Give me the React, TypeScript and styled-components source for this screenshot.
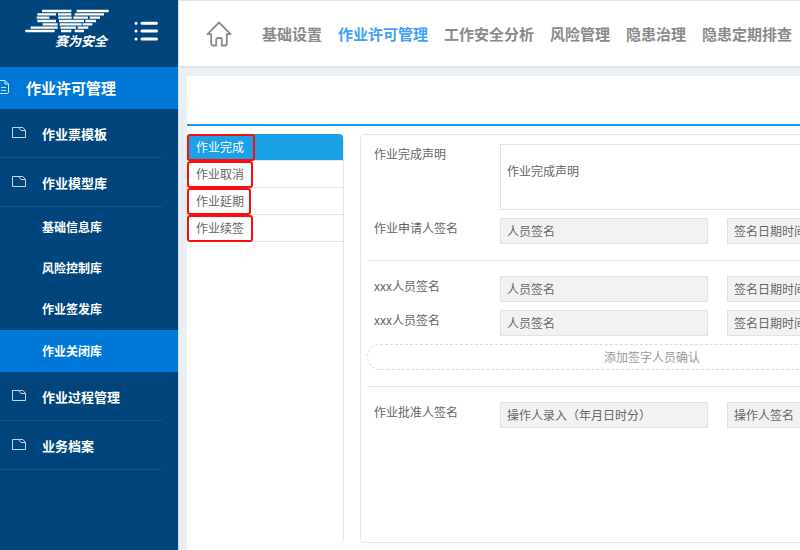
import React from "react";
import styled, { createGlobalStyle } from "styled-components";

const GlobalStyle = createGlobalStyle`
  * { box-sizing: border-box; }
  body {
    margin: 0;
    background: #ebeff3;
    color: #666;
    font-family: "Noto Sans CJK SC", sans-serif;
    font-size: 12px;
  }
  button, input, textarea { font: inherit; color: inherit; }
`;

const Shell = styled.div`
  display: flex;
  min-height: 100vh;
  overflow: hidden;
`;

const Sidebar = styled.aside`
  flex: 0 0 178px;
  background: #00457c;
  color: #fff;
`;

const Brand = styled.div`
  display: flex;
  height: 67px;
  padding: 9px 20px 0 25px;
  justify-content: space-between;
`;

const BrandMark = styled.div`
  display: flex;
  flex-direction: column;
  align-items: flex-end;
  width: 84px;
`;

const BrandName = styled.span`
  padding-right: 2px;
  font-size: 13px;
  line-height: 16px;
  font-weight: 700;
  font-style: italic;
`;

const IconButton = styled.button`
  display: flex;
  align-self: flex-start;
  margin-top: 11px;
  padding: 0;
  border: 0;
  background: none;
`;

const ModuleLink = styled.a`
  display: flex;
  align-items: center;
  gap: 16px;
  height: 42px;
  padding-bottom: 2px;
  background: #0078d7;
  color: #fff;
  font-size: 15px;
  font-weight: 700;
  text-decoration: none;
`;

const GroupLink = styled.a`
  display: flex;
  align-items: center;
  gap: 16px;
  height: 49px;
  margin-right: 16px;
  padding-left: 12px;
  border-bottom: 1px solid #17568a;
  color: #fff;
  font-size: 13px;
  font-weight: 700;
  text-decoration: none;
`;

const SubLink = styled.a<{ $active?: boolean }>`
  display: flex;
  align-items: center;
  height: ${(p) => (p.$active ? 42 : 41)}px;
  padding: 0 0 2px 42px;
  background: ${(p) => (p.$active ? "#0078d7" : "transparent")};
  color: #fff;
  font-weight: 700;
  text-decoration: none;
`;

const Main = styled.div`
  flex: 1;
  min-width: 0;
  display: flex;
  flex-direction: column;
  border-left: 1px solid #d5dbe1;
`;

const TopBar = styled.header`
  display: flex;
  align-items: center;
  height: 68px;
  padding-left: 27px;
  gap: 30px;
  background: #fff;
  border-top: 1px solid #e2e4e6;
  border-bottom: 2px solid #e0e4e7;
`;

const TopNav = styled.nav`
  display: flex;
  gap: 16px;
`;

const NavLink = styled.a<{ $active?: boolean }>`
  flex: none;
  color: ${(p) => (p.$active ? "#40a2f7" : "#8a8a8a")};
  font-size: 15px;
  font-weight: 700;
  text-decoration: none;
`;

const Page = styled.main`
  flex: 1;
  display: flex;
  flex-direction: column;
  margin: 8px 0 0 8px;
  background: #fff;
`;

const Toolbar = styled.div`
  height: 50px;
  border-bottom: 2px solid #1296fb;
`;

const Workspace = styled.div`
  flex: 1;
  display: flex;
  gap: 16px;
  padding: 8px 0 7px;
`;

const TabPanel = styled.div`
  flex: 0 0 157px;
  border-right: 1px solid #e6e6e6;
  border-radius: 4px;
`;

const Tab = styled.button<{ $active?: boolean }>`
  position: relative;
  display: block;
  width: 100%;
  height: 27px;
  padding: 0 0 2px 9px;
  border: 0;
  border-bottom: 1px solid #e6e6e6;
  border-radius: ${(p) => (p.$active ? "4px 4px 0 0" : "0")};
  background: ${(p) => (p.$active ? "#1ba1e6" : "#fff")};
  color: ${(p) => (p.$active ? "#fff" : "#666")};
  text-align: left;
`;

const Highlight = styled.span<{ $width: number }>`
  position: absolute;
  top: 0;
  left: 0;
  width: ${(p) => p.$width}px;
  height: 27px;
  border: 2px solid #fb0d0d;
  border-radius: 3px;
`;

const FormPanel = styled.form`
  flex: 1 0 584px;
  border: 1px solid #e6e6e6;
  border-radius: 5px;
  padding: 9px 6px;
`;

const Section = styled.div<{ $last?: boolean }>`
  display: grid;
  gap: 8px;
  padding-bottom: ${(p) => (p.$last ? 0 : 16)}px;
  margin-bottom: ${(p) => (p.$last ? 0 : 15)}px;
  border-bottom: ${(p) => (p.$last ? "0" : "1px solid #e4e7ea")};
`;

const Row = styled.div`
  display: grid;
  grid-template-columns: 107px 1fr 1fr;
  column-gap: 19px;
  padding: 0 2px 0 7px;
`;

const Label = styled.label`
  line-height: 20px;
`;

const Field = styled.input`
  width: 100%;
  min-width: 0;
  height: 26px;
  padding: 0 6px 2px;
  border: 1px solid #dfe3e7;
  border-radius: 0;
  background: #f2f2f2;
  outline: 0;
`;

const Statement = styled.textarea`
  grid-column: 2 / 4;
  display: block;
  width: 100%;
  height: 66px;
  padding: 17px 6px;
  border: 1px solid #e2e5e8;
  line-height: 18px;
  resize: none;
  outline: 0;
`;

const AddButton = styled.button`
  height: 26px;
  padding: 0 0 2px;
  border: 1px dashed #dcdcdc;
  border-radius: 13px;
  background: #fff;
  color: #999;
`;

const Logo = () => (
  <svg width="84" height="24" viewBox="75 27 252 72" fill="none" stroke="#fff" strokeWidth="7" aria-hidden="true">
    <path d="M126 33H214M230 33H326M112 43H168M174 43H214M224 43H312M110 53H148M175 53H215M220 53H264M269 53H300M112 63H168M177 63H252M256 63H288M128 73H173M179 73H245M248 73H277M92 83H173M181 83H228M233 83H265M76 93H164M183 93H214M224 93H252" />
  </svg>
);

const MenuIcon = () => (
  <svg width="24" height="22" viewBox="0 0 24 22" fill="none" stroke="#fff" strokeWidth="3" strokeLinecap="round" aria-hidden="true">
    <path d="M2 3.3h.1M8 3.3h14.5M2 11.1h.1M8 11.1h14.5M2 19h.1M8 19h14.5" />
  </svg>
);

const HomeIcon = () => (
  <svg width="26" height="26" viewBox="0 0 26 26" fill="none" stroke="#8c8c8c" strokeWidth="1.8" strokeLinejoin="round" strokeLinecap="round" aria-hidden="true">
    <path d="M13 1.5L1.5 13.2H5.2V22.5Q5.2 24.5 7 24.5H10.2V18.5Q10.2 17 11.7 17H14.3Q15.8 17 15.8 18.5V24.5H19Q20.8 24.5 20.8 22.5V13.2H24.5Z" />
  </svg>
);

const FolderIcon = () => (
  <svg width="14" height="12" viewBox="0 0 14 12" fill="none" stroke="#c5d5e3" aria-hidden="true">
    <path d="M.5 .5V10.5H13.5V3.5L11 .5ZM6.5 .5L9 3.5H13.5" />
  </svg>
);

const DocumentIcon = () => (
  <svg width="10" height="14" viewBox="0 0 10 14" fill="none" stroke="#cfe5f8" aria-hidden="true">
    <path d="M0 .5H5L8.5 4V12Q8.5 13.5 7 13.5H0M5 .5V4H8.5M1 7.5H6M1 10.5H6" />
  </svg>
);

const navItems = ["基础设置", "作业许可管理", "工作安全分析", "风险管理", "隐患治理", "隐患定期排查"];
const subItems = ["基础信息库", "风险控制库", "作业签发库", "作业关闭库"];
const tabs = [
  { name: "作业完成", mark: 68 },
  { name: "作业取消", mark: 66 },
  { name: "作业延期", mark: 64 },
  { name: "作业续签", mark: 66 },
];

const Group = ({ name }: { name: string }) => (
  <GroupLink href="#">
    <FolderIcon />
    {name}
  </GroupLink>
);

type SignRowProps = { id: string; label: string; first: string; second: string };

const SignRow = ({ id, label, first, second }: SignRowProps) => (
  <Row>
    <Label htmlFor={id}>{label}</Label>
    <Field id={id} defaultValue={first} readOnly />
    <Field aria-label={`${label} ${second}`} defaultValue={second} readOnly />
  </Row>
);

export default function App() {
  return (
    <>
      <GlobalStyle />
      <Shell>
        <Sidebar>
          <Brand>
            <BrandMark>
              <Logo />
              <BrandName>赛为安全</BrandName>
            </BrandMark>
            <IconButton type="button" aria-label="菜单">
              <MenuIcon />
            </IconButton>
          </Brand>
          <ModuleLink href="#">
            <DocumentIcon />
            作业许可管理
          </ModuleLink>
          <Group name="作业票模板" />
          <Group name="作业模型库" />
          {subItems.map((name) => (
            <SubLink key={name} href="#" $active={name === "作业关闭库"}>
              {name}
            </SubLink>
          ))}
          <Group name="作业过程管理" />
          <Group name="业务档案" />
        </Sidebar>
        <Main>
          <TopBar>
            <HomeIcon />
            <TopNav>
              {navItems.map((name) => (
                <NavLink key={name} href="#" $active={name === "作业许可管理"}>
                  {name}
                </NavLink>
              ))}
            </TopNav>
          </TopBar>
          <Page>
            <Toolbar />
            <Workspace>
              <TabPanel>
                {tabs.map((tab, i) => (
                  <Tab key={tab.name} type="button" $active={i === 0}>
                    {tab.name}
                    <Highlight $width={tab.mark} />
                  </Tab>
                ))}
              </TabPanel>
              <FormPanel>
                <Section>
                  <Row>
                    <Label htmlFor="statement">作业完成声明</Label>
                    <Statement id="statement" defaultValue="作业完成声明" />
                  </Row>
                  <SignRow id="applicant" label="作业申请人签名" first="人员签名" second="签名日期时间" />
                </Section>
                <Section>
                  <SignRow id="signer1" label="xxx人员签名" first="人员签名" second="签名日期时间" />
                  <SignRow id="signer2" label="xxx人员签名" first="人员签名" second="签名日期时间" />
                  <AddButton type="button">添加签字人员确认</AddButton>
                </Section>
                <Section $last>
                  <SignRow id="approver" label="作业批准人签名" first="操作人录入（年月日时分）" second="操作人签名" />
                </Section>
              </FormPanel>
            </Workspace>
          </Page>
        </Main>
      </Shell>
    </>
  );
}
